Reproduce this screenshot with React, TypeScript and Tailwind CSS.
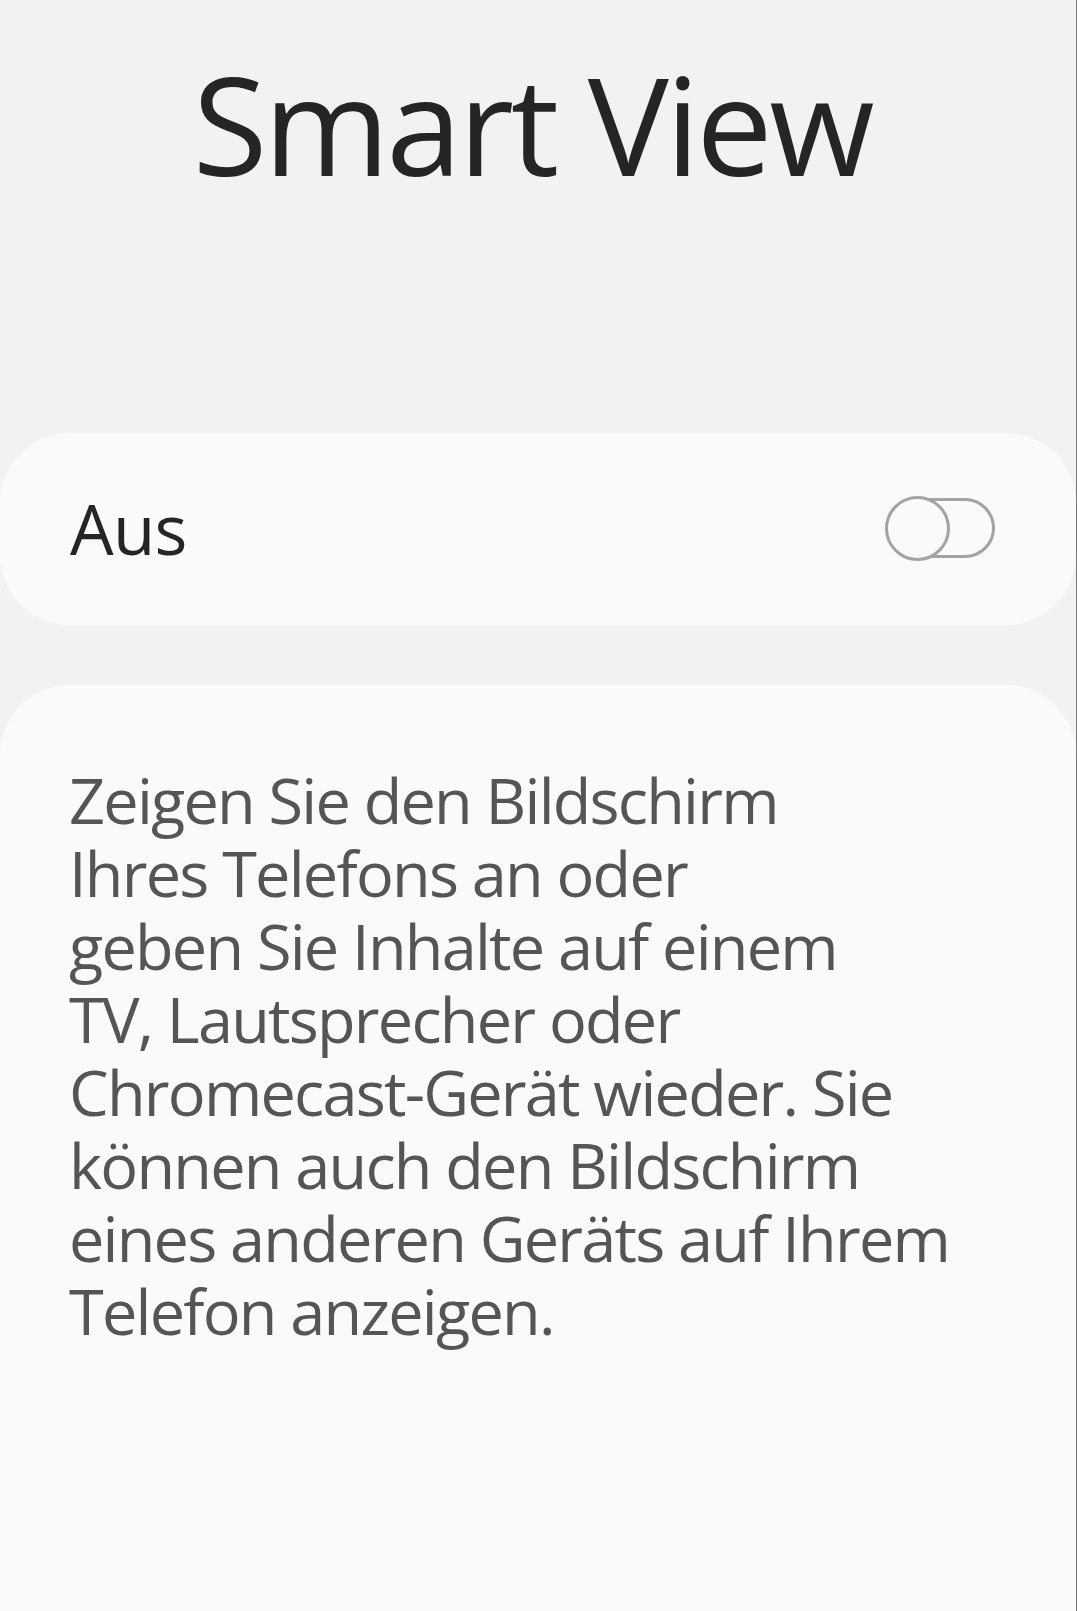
import React from "react";

const lines = [
  "Zeigen Sie den Bildschirm",
  "Ihres Telefons an oder",
  "geben Sie Inhalte auf einem",
  "TV, Lautsprecher oder",
  "Chromecast-Gerät wieder. Sie",
  "können auch den Bildschirm",
  "eines anderen Geräts auf Ihrem",
  "Telefon anzeigen.",
];

function Toggle() {
  return (
    <svg width="112" height="66" viewBox="0 0 112 66" fill="none">
      <rect x="10" y="3.5" width="99.5" height="57" rx="28.5" stroke="#a3a3a3" strokeWidth="3" />
      <circle cx="33.5" cy="32.5" r="31" fill="#fafafa" stroke="#a3a3a3" strokeWidth="3" />
    </svg>
  );
}

export default function App() {
  return (
    <div
      className="w-[1077px] h-[1611px] bg-[#f2f2f2] border-r border-[#777] overflow-hidden flex flex-col pt-[56px]"
      style={{ fontFamily: '"Open Sans", "Noto Sans", sans-serif' }}
    >
      <h1 className="text-center text-[136px] leading-[136px] text-[#252525] tracking-[-0.025em] pr-[12px]">
        Smart View
      </h1>

      <div className="mt-[241px] h-[192px] bg-[#fafafa] rounded-[70px] flex items-center justify-between pl-[70px] pr-[80px]">
        <span className="text-[69px] text-[#252525] tracking-[-0.01em]">Aus</span>
        <Toggle />
      </div>

      <div className="mt-[60px] grow bg-[#fafafa] rounded-t-[70px] pt-[78px] pl-[69px]">
        <p className="text-[63px] leading-[73px] text-[#555555] tracking-[-0.028em]">
          {lines.map((line, i) => (
            <span key={i} className="block whitespace-nowrap">
              {line}
            </span>
          ))}
        </p>
      </div>
    </div>
  );
}
